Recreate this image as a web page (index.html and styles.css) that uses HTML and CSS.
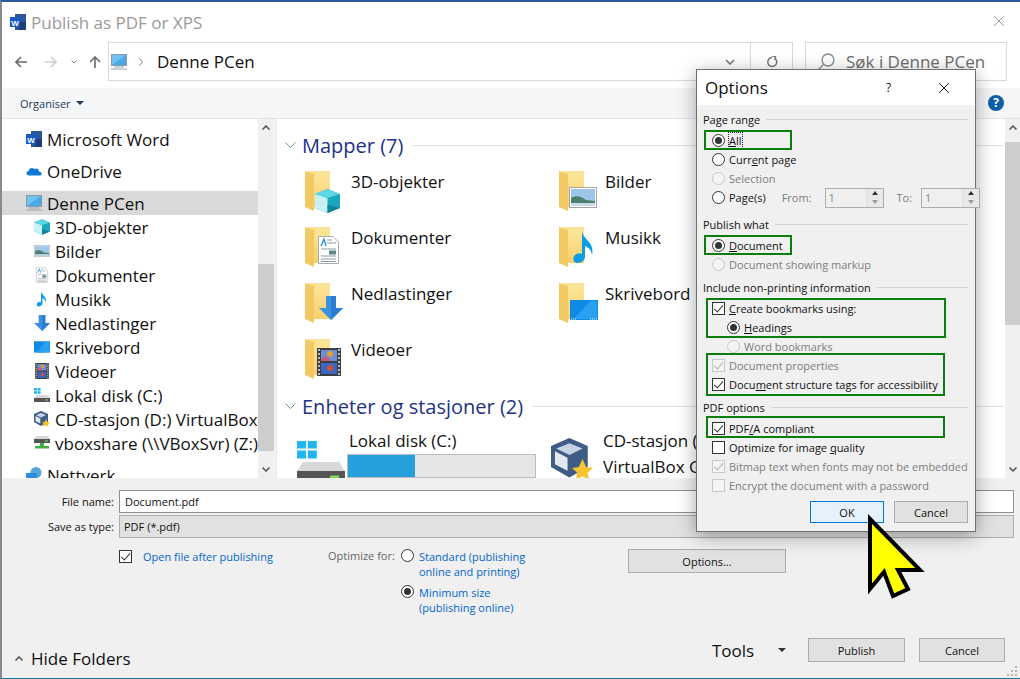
FILE: index.html
```html
<!DOCTYPE html>
<html lang="en">

<head>
    <meta charset="UTF-8">
    <meta name="viewport" content="width=device-width, initial-scale=1.0">
    <title>Publish as PDF or XPS</title>
    <link rel="stylesheet" href="styles.css">
</head>

<body>
    <svg class="sprites" width="0" height="0">
        <defs>
            <linearGradient id="folderFill" x1="0" y1="0" x2="0" y2="1">
                <stop offset="0" stop-color="#fde79c" />
                <stop offset="1" stop-color="#f6d06c" />
            </linearGradient>
            <symbol id="folder" viewBox="0 0 25 40">
                <rect x="5" y="0" width="20" height="36" fill="url(#folderFill)" />
                <path d="M0 0 L9 3 V40 L0 36 Z" fill="#f2c862" />
                <path d="M0 0 L9 3 L25 3 V0 Z" fill="#fbe295" />
            </symbol>
            <symbol id="word" viewBox="0 0 16 16">
                <rect x="5" y="0" width="11" height="16" fill="#2b579a" />
                <rect x="9" y="8" width="7" height="8" fill="#1a3f7a" />
                <rect x="0" y="3" width="10" height="10" fill="#185abd" />
                <text x="5" y="11.5" class="word-letter">W</text>
            </symbol>
            <symbol id="cloud" viewBox="0 0 16 16">
                <path d="M3 12.5 C0 12.5 -0.4 8.6 2.6 8 C3 5.5 6.3 4 8.3 6 C10.5 4.5 13 6 13 8.5 C16.4 8.7 16.4 12.5 13.5 12.5 Z" fill="#0f78d4" />
            </symbol>
            <symbol id="monitor" viewBox="0 0 16 16">
                <rect x="0.5" y="0.5" width="15" height="11" fill="#6fc3f2" stroke="#8a9aa6" />
                <path d="M1 11 L15 1 V11 Z" fill="#4aa9e6" />
                <rect x="3" y="12.5" width="10" height="1" fill="#9aa6b0" />
                <rect x="0" y="14.5" width="16" height="1" fill="#9aa6b0" />
            </symbol>
            <symbol id="cube" viewBox="0 0 25 24">
                <path d="M12.5 0 L25 5 V19 L12.5 24 L0 19 V5 Z" fill="#1ba7bd" />
                <path d="M0 5 L12.5 9 V24 L0 19 Z" fill="#c8f1f4" />
                <path d="M0 5 L12.5 0 L25 5 L12.5 9 Z" fill="#5fd7e2" />
                <path d="M12.5 16 L25 19 L12.5 24 Z" fill="#0e8397" />
            </symbol>
            <symbol id="picture" viewBox="0 0 28 21">
                <rect x="0.5" y="0.5" width="27" height="20" fill="#fff" stroke="#a5a5a5" />
                <rect x="2" y="2" width="24" height="17" fill="#9cc6ea" />
                <path d="M2 11 C7 8 12 9 17 13 L26 14 V19 H2 Z" fill="#4d7f6d" />
                <rect x="2" y="16" width="24" height="3" fill="#c6dced" />
            </symbol>
            <symbol id="doc" viewBox="0 0 21 28">
                <path d="M0.5 0.5 H15 L20.5 6 V27.5 H0.5 Z" fill="#fff" stroke="#a8adb2" />
                <path d="M3 10 L6 3 L8 10" fill="none" stroke="#2a8fe0" stroke-width="1.4" />
                <path d="M9 4 H14 M9 7 H18 M3 13 H18 M3 20 H18 M3 23 H18 M3 25.5 H18" stroke="#8d99a5" />
                <rect x="11" y="14.5" width="7" height="4" fill="#5d8a88" />
            </symbol>
            <symbol id="note" viewBox="0 0 22 33">
                <path d="M9 0 C10 9 22 11 19 24 C18.5 19 15 16 12 15 V26 C12 31 2 35 0.5 29 C-0.5 24 5 21 9 23 Z" fill="#0d9de8" />
            </symbol>
            <symbol id="arrow" viewBox="0 0 24 24">
                <path d="M7 0 H17 V12 H24 L12 24 L0 12 H7 Z" fill="#3d91e0" />
                <path d="M12 0 H17 V12 H24 L12 24 Z" fill="#2b7fd2" />
            </symbol>
            <symbol id="desktop" viewBox="0 0 28 20">
                <rect x="0" y="0" width="28" height="20" fill="#0f8be6" />
                <path d="M4 19 L20 1 H27 V19 Z" fill="#2aa1f0" />
                <path d="M1 19 H6 M20 19 H27" stroke="#fff" stroke-dasharray="1 1" />
            </symbol>
            <symbol id="film" viewBox="0 0 24 28">
                <rect x="0" y="0" width="24" height="28" fill="#3d3d3d" />
                <rect x="4" y="2" width="16" height="11" fill="#6f8ed8" />
                <rect x="4" y="15" width="16" height="11" fill="#3a66c6" />
                <circle cx="13" cy="6" r="3" fill="#e0a02c" />
                <circle cx="13" cy="20" r="3" fill="#d2502c" />
                <path d="M4 11 L9 8 L14 13 H4 Z" fill="#c85a78" />
                <path d="M2 1 V27 M22 1 V27" stroke="#ddd" stroke-width="1.6" stroke-dasharray="2 2" />
            </symbol>
            <symbol id="disk" viewBox="0 0 16 16">
                <path d="M0 1 H3 V3.5 H0 Z M3.6 1 H6.6 V3.5 H3.6 Z M0 4.2 H3 V6.8 H0 Z M3.6 4.2 H6.6 V6.8 H3.6 Z" fill="#1fb6f1" />
                <path d="M2 8 H14 L16 11 H0 Z" fill="#d8d8d8" />
                <rect x="0" y="11" width="16" height="4" fill="#555" />
                <rect x="11" y="12.5" width="3" height="1" fill="#7ed957" />
            </symbol>
            <symbol id="vbox" viewBox="0 0 16 16">
                <path d="M7 0 L14 3 V11 L7 15 L0 11 V3 Z" fill="#3f5c86" />
                <path d="M7 2 L12 4 L7 6.5 L2 4 Z" fill="#c6d3e2" />
                <path d="M1.5 5 L6.3 7.5 V12.5 L1.5 10 Z" fill="#e4e9ef" />
                <path d="M12 8 L13.4 11 L16 11.4 L14 13.2 L14.6 16 L12 14.6 L9.4 16 L10 13.2 L8 11.4 L10.6 11 Z" fill="#f5c430" />
            </symbol>
            <symbol id="share" viewBox="0 0 16 16">
                <path d="M2 1 H14 L16 4 H0 Z" fill="#d8d8d8" />
                <rect x="0" y="4" width="16" height="4" fill="#555" />
                <rect x="11" y="5.5" width="3" height="1" fill="#7ed957" />
                <path d="M6 8 H10 V11 H6 Z M1 11 H15 V13.5 H1 Z" fill="#3fae3f" />
            </symbol>
            <symbol id="network" viewBox="0 0 16 16">
                <circle cx="10" cy="5.5" r="5.5" fill="#57a6dc" />
                <rect x="0" y="6" width="11" height="8" fill="#2f8fdc" />
                <rect x="0" y="14" width="11" height="2" fill="#999" />
            </symbol>
        </defs>
    </svg>

    <div class="window">
        <div class="titlebar">
            <svg class="title-icon"><use href="#word" /></svg>
            <span class="title-text">Publish as PDF or XPS</span>
            <svg class="close-x" viewBox="0 0 12 12"><path d="M1 1 L11 11 M11 1 L1 11" /></svg>
        </div>

        <div class="navbar">
            <div class="nav-buttons">
                <svg class="nav-arrow" viewBox="0 0 12 12"><path d="M12 6 H1 M6 1 L1 6 L6 11" /></svg>
                <svg class="nav-arrow nav-off" viewBox="0 0 12 12"><path d="M0 6 H11 M6 1 L11 6 L6 11" /></svg>
                <svg class="nav-drop" viewBox="0 0 6 4"><path d="M0.5 0.5 L3 3 L5.5 0.5" /></svg>
                <svg class="nav-arrow" viewBox="0 0 12 12"><path d="M6 12 V1 M1 6 L6 1 L11 6" /></svg>
            </div>
            <div class="address">
                <svg class="address-icon"><use href="#monitor" /></svg>
                <svg class="crumb" viewBox="0 0 4 8"><path d="M0.5 0.5 L3.5 4 L0.5 7.5" /></svg>
                <span class="address-text">Denne PCen</span>
                <svg class="address-drop" viewBox="0 0 10 6"><path d="M1 1 L5 5 L9 1" /></svg>
                <div class="refresh">
                    <svg viewBox="0 0 12 12"><path d="M9.6 3 A4.5 4.5 0 1 1 6 1.5" /><path class="refresh-tip" d="M6 0 L9.5 0.5 L9 4" /></svg>
                </div>
            </div>
            <div class="search">
                <svg class="search-icon" viewBox="0 0 18 18"><circle cx="11" cy="7" r="6" /><path d="M6.5 11.5 L1 17" /></svg>
                <span>Søk i Denne PCen</span>
            </div>
        </div>

        <div class="toolbar">
            <span class="organise">Organiser</span>
            <span class="caret"></span>
            <span class="help">?</span>
        </div>

        <div class="browser">
            <div class="tree">
                <div class="tree-row tree-top"><svg class="tree-icon"><use href="#word" /></svg>Microsoft Word</div>
                <div class="tree-row tree-top"><svg class="tree-icon"><use href="#cloud" /></svg>OneDrive</div>
                <div class="tree-row tree-top tree-selected"><svg class="tree-icon"><use href="#monitor" /></svg>Denne PCen</div>
                <div class="tree-row"><svg class="tree-icon"><use href="#cube" /></svg>3D-objekter</div>
                <div class="tree-row"><svg class="tree-icon"><use href="#picture" /></svg>Bilder</div>
                <div class="tree-row"><svg class="tree-icon"><use href="#doc" /></svg>Dokumenter</div>
                <div class="tree-row"><svg class="tree-icon"><use href="#note" /></svg>Musikk</div>
                <div class="tree-row"><svg class="tree-icon"><use href="#arrow" /></svg>Nedlastinger</div>
                <div class="tree-row"><svg class="tree-icon"><use href="#desktop" /></svg>Skrivebord</div>
                <div class="tree-row"><svg class="tree-icon"><use href="#film" /></svg>Videoer</div>
                <div class="tree-row"><svg class="tree-icon"><use href="#disk" /></svg>Lokal disk (C:)</div>
                <div class="tree-row"><svg class="tree-icon"><use href="#vbox" /></svg>CD-stasjon (D:) VirtualBox Guest</div>
                <div class="tree-row"><svg class="tree-icon"><use href="#share" /></svg>vboxshare (\\VBoxSvr) (Z:)</div>
                <div class="tree-row tree-top tree-net"><svg class="tree-icon"><use href="#network" /></svg>Nettverk</div>
            </div>
            <div class="scrollbar tree-scroll">
                <svg class="scroll-arrow" viewBox="0 0 8 5"><path d="M0.5 4.5 L4 1 L7.5 4.5" /></svg>
                <div class="scroll-track"><div class="scroll-thumb"></div></div>
                <svg class="scroll-arrow" viewBox="0 0 8 5"><path d="M0.5 0.5 L4 4 L7.5 0.5" /></svg>
            </div>
            <div class="sash"></div>

            <div class="files">
                <div class="group-head">
                    <svg class="group-chevron" viewBox="0 0 11 6"><path d="M0.5 0.5 L5.5 5.5 L10.5 0.5" /></svg>
                    <span>Mapper (7)</span>
                    <div class="group-line"></div>
                </div>
                <div class="file-grid">
                    <div class="file-item">
                        <svg class="file-icon"><use href="#folder" x="4" y="2" width="25" height="40" /><use href="#cube" x="14" y="20" width="25" height="24" /></svg>
                        <span>3D-objekter</span>
                    </div>
                    <div class="file-item">
                        <svg class="file-icon"><use href="#folder" x="4" y="2" width="25" height="40" /><use href="#picture" x="14" y="18" width="28" height="21" /></svg>
                        <span>Bilder</span>
                    </div>
                    <div class="file-item">
                        <svg class="file-icon"><use href="#folder" x="4" y="2" width="25" height="40" /><use href="#doc" x="17" y="11" width="21" height="28" /></svg>
                        <span>Dokumenter</span>
                    </div>
                    <div class="file-item">
                        <svg class="file-icon"><use href="#folder" x="4" y="2" width="25" height="40" /><use href="#note" x="18" y="6" width="22" height="33" /></svg>
                        <span>Musikk</span>
                    </div>
                    <div class="file-item">
                        <svg class="file-icon"><use href="#folder" x="4" y="2" width="25" height="40" /><use href="#arrow" x="18" y="15" width="24" height="24" /></svg>
                        <span>Nedlastinger</span>
                    </div>
                    <div class="file-item">
                        <svg class="file-icon"><use href="#folder" x="4" y="2" width="25" height="40" /><use href="#desktop" x="15" y="19" width="28" height="20" /></svg>
                        <span>Skrivebord</span>
                    </div>
                    <div class="file-item">
                        <svg class="file-icon"><use href="#folder" x="4" y="2" width="25" height="40" /><use href="#film" x="16" y="11" width="24" height="28" /></svg>
                        <span>Videoer</span>
                    </div>
                </div>
                <div class="group-head">
                    <svg class="group-chevron" viewBox="0 0 11 6"><path d="M0.5 0.5 L5.5 5.5 L10.5 0.5" /></svg>
                    <span>Enheter og stasjoner (2)</span>
                    <div class="group-line"></div>
                </div>
                <div class="file-grid drive-grid">
                    <div class="drive-item">
                        <svg class="drive-icon"><use href="#disk" width="48" height="48" /></svg>
                        <div class="drive-info">
                            <span>Lokal disk (C:)</span>
                            <div class="drive-bar"><div class="drive-used"></div></div>
                        </div>
                    </div>
                    <div class="drive-item">
                        <svg class="drive-icon"><use href="#vbox" width="42" height="42" /></svg>
                        <div class="drive-info">
                            <span>CD-stasjon (D:)</span>
                            <span>VirtualBox Guest</span>
                        </div>
                    </div>
                </div>
            </div>

            <div class="scrollbar files-scroll">
                <svg class="scroll-arrow" viewBox="0 0 8 5"><path d="M0.5 4.5 L4 1 L7.5 4.5" /></svg>
                <div class="scroll-track"><div class="scroll-thumb"></div></div>
                <svg class="scroll-arrow" viewBox="0 0 8 5"><path d="M0.5 0.5 L4 4 L7.5 0.5" /></svg>
            </div>
        </div>

        <div class="form">
            <div class="field">
                <label>File name:</label>
                <div class="field-box field-input">Document.pdf</div>
            </div>
            <div class="field">
                <label>Save as type:</label>
                <div class="field-box field-select">PDF (*.pdf)</div>
            </div>
            <div class="publish-options">
                <div class="open-after">
                    <span class="check on"></span>
                    <span class="link-text">Open file after publishing</span>
                </div>
                <span class="optimize-label">Optimize for:</span>
                <div class="optimize-choices">
                    <div class="optimize-choice">
                        <span class="radio"></span>
                        <span class="link-text">Standard (publishing<br>online and printing)</span>
                    </div>
                    <div class="optimize-choice">
                        <span class="radio on"></span>
                        <span class="link-text">Minimum size<br>(publishing online)</span>
                    </div>
                </div>
                <button class="btn btn-options">Options...</button>
            </div>
            <div class="form-footer">
                <div class="hide-folders">
                    <svg viewBox="0 0 8 5"><path d="M0.5 4.5 L4 1 L7.5 4.5" /></svg>
                    <span>Hide Folders</span>
                </div>
                <span class="tools">Tools</span>
                <span class="caret tools-caret"></span>
                <button class="btn btn-publish">Publish</button>
                <button class="btn btn-cancel">Cancel</button>
            </div>
            <svg class="grip" viewBox="0 0 12 12"><path d="M9 1 h2 v2 h-2 Z M5 5 h2 v2 h-2 Z M9 5 h2 v2 h-2 Z M1 9 h2 v2 h-2 Z M5 9 h2 v2 h-2 Z M9 9 h2 v2 h-2 Z" /></svg>
        </div>
    </div>

    <!-- options dialog on top of the file browser -->
    <div class="dialog">
        <div class="dialog-title">
            <span class="dialog-name">Options</span>
            <span class="dialog-q">?</span>
            <svg class="dialog-x" viewBox="0 0 12 12"><path d="M1 1 L11 11 M11 1 L1 11" /></svg>
        </div>
        <div class="dialog-body">
            <div class="legend legend-first"><span>Page range</span><div class="legend-line"></div></div>
            <div class="opt"><span class="radio on"></span><span class="focus-label"><u>A</u>ll</span></div>
            <div class="opt"><span class="radio"></span><span>Curr<u>e</u>nt page</span></div>
            <div class="opt opt-off"><span class="radio"></span><span>Selection</span></div>
            <div class="opt">
                <span class="radio"></span><span>Pa<u>g</u>e(s)</span>
                <span class="spin-label spin-from">From:</span>
                <div class="spin"><span>1</span><div class="spin-btns"><i class="up"></i><i class="down"></i></div></div>
                <span class="spin-label spin-to">To:</span>
                <div class="spin"><span>1</span><div class="spin-btns"><i class="up"></i><i class="down"></i></div></div>
            </div>

            <div class="legend legend-what"><span>Publish what</span><div class="legend-line"></div></div>
            <div class="opt"><span class="radio on"></span><span><u>D</u>ocument</span></div>
            <div class="opt opt-off"><span class="radio"></span><span>Document showing markup</span></div>

            <div class="legend"><span>Include non-printing information</span><div class="legend-line"></div></div>
            <div class="opt"><span class="check on"></span><span><u>C</u>reate bookmarks using:</span></div>
            <div class="opt opt-sub"><span class="radio on"></span><span><u>H</u>eadings</span></div>
            <div class="opt opt-sub opt-off"><span class="radio"></span><span>Word bookmarks</span></div>
            <div class="opt opt-off"><span class="check on"></span><span>Document properties</span></div>
            <div class="opt"><span class="check on"></span><span>Docu<u>m</u>ent structure tags for accessibility</span></div>

            <div class="legend"><span>PDF options</span><div class="legend-line"></div></div>
            <div class="opt"><span class="check on"></span><span>PDF<u>/</u>A compliant</span></div>
            <div class="opt"><span class="check"></span><span>Optimize for image <u>q</u>uality</span></div>
            <div class="opt opt-off"><span class="check on"></span><span>Bitmap text when fonts may not be embedded</span></div>
            <div class="opt opt-off"><span class="check"></span><span>Encrypt the document with a password</span></div>

            <div class="dialog-buttons">
                <button class="btn btn-ok">OK</button>
                <button class="btn btn-dialog-cancel">Cancel</button>
            </div>
        </div>

        <div class="mark mark-all"></div>
        <div class="mark mark-document"></div>
        <div class="mark mark-bookmarks"></div>
        <div class="mark mark-tags"></div>
        <div class="mark mark-pdfa"></div>
    </div>

    <svg class="pointer" viewBox="0 0 70 95">
        <path d="M10 14 L60 65 L38 65 L48 84 L33 91 L24 67 L10 84 Z" />
    </svg>
</body>

</html>
```

FILE: styles.css
```css
* {
    box-sizing: border-box;
}

html,
body {
    margin: 0;
    width: 1020px;
    height: 679px;
    overflow: hidden;
}

body {
    font-family: "Open Sans", "Noto Sans", sans-serif;
    color: #111;
    background: #fff;
    position: relative;
}

.sprites {
    position: absolute;
}

.word-letter {
    font-family: "Liberation Sans", sans-serif;
    font-size: 8px;
    font-weight: 700;
    fill: #fff;
    text-anchor: middle;
}

svg path {
    fill-rule: nonzero;
}

.window {
    width: 1020px;
    height: 679px;
    display: flex;
    flex-direction: column;
    border-top: 2px solid #2b579a;
    border-left: 2px solid #8a8a8a;
    border-bottom: 1px solid #0a7ab0;
    background: #fff;
}

/* title bar */
.titlebar {
    height: 40px;
    flex-shrink: 0;
    display: flex;
    align-items: center;
    padding-left: 8px;
    padding-right: 15px;
}

.title-icon {
    width: 16px;
    height: 16px;
    margin-right: 5px;
}

.title-text {
    font-size: 17px;
    color: #9a9a9a;
}

.close-x {
    width: 12px;
    height: 12px;
    margin-left: auto;
    margin-top: -3px;
    fill: none;
    stroke: #a0a0a0;
}

/* address row */
.navbar {
    height: 39px;
    flex-shrink: 0;
    display: flex;
}

.nav-buttons {
    width: 106px;
    flex-shrink: 0;
    display: flex;
    align-items: center;
    padding-left: 13px;
}

.nav-buttons svg {
    fill: none;
    stroke: #6a6a6a;
    stroke-width: 1.6;
}

.nav-arrow {
    width: 12px;
    height: 12px;
}

.nav-arrow.nav-off {
    margin-left: 18px;
    stroke: #cfcfcf;
}

.nav-buttons .nav-drop {
    width: 6px;
    height: 4px;
    margin: 0 12px 0 14px;
    stroke: #888;
    stroke-width: 1;
}

.address {
    width: 685px;
    flex-shrink: 0;
    border: 1px solid #d9d9d9;
    display: flex;
    align-items: center;
    padding-left: 2px;
}

.address-icon {
    width: 16px;
    height: 16px;
}

.crumb {
    width: 4px;
    height: 8px;
    margin-left: 12px;
    fill: none;
    stroke: #777;
}

.address-text {
    font-size: 17px;
    margin-left: 14px;
}

.address-drop {
    width: 10px;
    height: 6px;
    margin-left: auto;
    margin-right: 15px;
    fill: none;
    stroke: #777;
    stroke-width: 1.6;
}

.refresh {
    width: 42px;
    height: 100%;
    border-left: 1px solid #d9d9d9;
    display: flex;
    align-items: center;
    justify-content: center;
}

.refresh svg {
    width: 12px;
    height: 12px;
    fill: none;
    stroke: #777;
    stroke-width: 1.5;
}

.search {
    width: 202px;
    margin-left: 12px;
    border: 1px solid #d9d9d9;
    display: flex;
    align-items: center;
    padding-left: 11px;
    font-size: 17px;
    color: #6d6d6d;
}

.search-icon {
    width: 18px;
    height: 18px;
    margin-right: 11px;
    fill: none;
    stroke: #8a8a8a;
    stroke-width: 1.3;
}

/* organise row */
.toolbar {
    height: 31px;
    margin-top: 7px;
    flex-shrink: 0;
    background: #f5f6f7;
    border-bottom: 1px solid #e2e2e2;
    display: flex;
    align-items: center;
    padding-left: 18px;
    padding-right: 16px;
}

.organise {
    font-size: 11px;
    color: #1e395b;
}

.caret {
    width: 0;
    height: 0;
    margin-left: 5px;
    border-left: 4px solid transparent;
    border-right: 4px solid transparent;
    border-top: 4px solid #1e395b;
}

.help {
    width: 16px;
    height: 16px;
    margin-left: auto;
    border-radius: 50%;
    background: #0f5fa8;
    color: #fff;
    font-size: 12px;
    font-weight: 700;
    line-height: 16px;
    text-align: center;
}

/* navigation tree and file list */
.browser {
    height: 359px;
    flex-shrink: 0;
    display: flex;
    overflow: hidden;
}

.tree {
    width: 256px;
    flex-shrink: 0;
    padding-top: 8px;
    overflow: hidden;
}

.tree-row {
    height: 24px;
    display: flex;
    align-items: center;
    padding-left: 32px;
    font-size: 17px;
    white-space: nowrap;
    overflow: hidden;
}

.tree-top {
    padding-left: 24px;
    margin-bottom: 8px;
}

.tree-selected {
    background: #d9d9d9;
    margin-bottom: 0;
}

.tree-net {
    margin-top: 8px;
}

.tree-icon {
    width: 16px;
    height: 16px;
    margin-right: 5px;
    flex-shrink: 0;
}

.scrollbar {
    width: 16px;
    flex-shrink: 0;
    background: #f0f0f0;
    display: flex;
    flex-direction: column;
    align-items: center;
    padding: 6px 0;
}

.scroll-arrow {
    width: 8px;
    height: 5px;
    flex-shrink: 0;
    fill: none;
    stroke: #505050;
    stroke-width: 1.5;
}

.scroll-track {
    flex: 1;
    width: 100%;
    margin: 3px 0;
}

.scroll-thumb {
    width: 100%;
    background: #cdcdcd;
}

.tree-scroll .scroll-thumb {
    height: 187px;
    margin-top: 131px;
}

.files-scroll {
    margin-left: 1px;
}

.files-scroll .scroll-thumb {
    height: 183px;
    margin-top: 9px;
}

.sash {
    width: 3px;
    flex-shrink: 0;
    background: #f4f4f4;
    border-right: 1px solid #e8e8e8;
}

.files {
    width: 727px;
    flex-shrink: 0;
    padding-top: 13px;
    padding-left: 8px;
}

.group-head {
    height: 26px;
    display: flex;
    align-items: center;
    font-size: 20px;
    color: #1e3287;
}

.group-chevron {
    width: 11px;
    height: 6px;
    margin-right: 6px;
    fill: none;
    stroke: #8a8a8a;
}

.group-line {
    flex: 1;
    height: 1px;
    margin-left: 9px;
    background: #e2e2e2;
}

.file-grid {
    display: grid;
    grid-template-columns: 254px 254px;
    grid-auto-rows: 56px;
    margin-top: 11px;
    padding-left: 16px;
}

.file-item {
    display: flex;
    gap: 2px;
    font-size: 17px;
    line-height: 26px;
}

.file-icon {
    width: 48px;
    height: 48px;
    flex-shrink: 0;
}

.drive-grid {
    margin-top: 9px;
    margin-left: -4px;
}

.drive-item {
    display: flex;
    font-size: 17px;
    line-height: 26px;
}

.drive-icon {
    width: 48px;
    height: 48px;
    flex-shrink: 0;
    margin-top: 10px;
}

.drive-info {
    display: flex;
    flex-direction: column;
    white-space: nowrap;
    margin-left: 4px;
}

.drive-bar {
    width: 189px;
    height: 24px;
    margin-left: -2px;
    background: #e6e6e6;
    border: 1px solid #bcbcbc;
}

.drive-used {
    width: 36%;
    height: 100%;
    background: #26a0da;
}

/* bottom form */
.form {
    flex: 1;
    background: #f0f0f0;
    display: flex;
    flex-direction: column;
    padding-top: 12px;
    position: relative;
    font-size: 11px;
}

.field {
    display: flex;
    align-items: center;
    margin-bottom: 2px;
}

.field label {
    width: 112px;
    text-align: right;
    margin-right: 5px;
}

.field-box {
    width: 895px;
    height: 23px;
    display: flex;
    align-items: center;
    padding-left: 5px;
}

.field-input {
    background: #fff;
    border: 1px solid #8f8f8f;
}

.field-select {
    background: #e1e1e1;
    border: 1px solid #adadad;
    padding-left: 4px;
}

.publish-options {
    display: flex;
    align-items: flex-start;
    margin-top: 9px;
    padding-left: 117px;
}

.open-after {
    width: 209px;
    display: flex;
    align-items: center;
    gap: 11px;
    height: 14px;
}

.link-text {
    color: #0066cc;
    line-height: 15px;
}

.optimize-label {
    width: 73px;
    color: #666;
    line-height: 14px;
}

.optimize-choices {
    width: 227px;
    display: flex;
    flex-direction: column;
    gap: 6px;
}

.optimize-choice {
    display: flex;
    align-items: flex-start;
    gap: 5px;
}

.form-footer {
    margin-top: auto;
    margin-bottom: 16px;
    display: flex;
    align-items: center;
    padding-left: 13px;
}

.hide-folders {
    width: 697px;
    display: flex;
    align-items: center;
    gap: 8px;
    font-size: 17px;
    position: relative;
    top: 8px;
}

.hide-folders svg {
    width: 8px;
    height: 5px;
    fill: none;
    stroke: #444;
    stroke-width: 1.4;
}

.tools {
    font-size: 17px;
    width: 66px;
}

.tools-caret {
    margin-left: 0;
    border-top-color: #333;
}

.grip {
    position: absolute;
    right: 2px;
    bottom: 1px;
    width: 12px;
    height: 12px;
    fill: #b5b5b5;
}

.btn {
    font-family: inherit;
    font-size: 11px;
    color: #111;
    height: 24px;
    padding: 0;
    background: #e1e1e1;
    border: 1px solid #adadad;
}

.btn-options {
    width: 158px;
    margin-left: 0;
}

.btn-publish {
    width: 97px;
    margin-left: 22px;
}

.btn-cancel {
    width: 86px;
    margin-left: 14px;
}

/* form controls shared by dialog and form */
.radio,
.check {
    width: 13px;
    height: 13px;
    flex-shrink: 0;
    display: inline-block;
    position: relative;
    border: 1px solid #333;
    background: #fff;
}

.radio {
    border-radius: 50%;
}

.radio.on::after {
    content: "";
    position: absolute;
    left: 2px;
    top: 2px;
    width: 7px;
    height: 7px;
    border-radius: 50%;
    background: #333;
}

.check.on::after {
    content: "";
    position: absolute;
    left: 3px;
    top: 0px;
    width: 4px;
    height: 8px;
    border-right: 1.5px solid #333;
    border-bottom: 1.5px solid #333;
    transform: rotate(40deg);
}

/* options dialog */
.dialog {
    position: absolute;
    left: 696px;
    top: 69px;
    width: 280px;
    height: 463px;
    background: #f0f0f0;
    border: 1px solid #707070;
    box-shadow: 0 4px 18px rgba(0, 0, 0, 0.35);
    font-size: 11px;
}

.dialog-title {
    height: 35px;
    background: #fff;
    display: flex;
    align-items: center;
    padding-left: 8px;
}

.dialog-name {
    font-size: 17px;
    width: 181px;
}

.dialog-q {
    font-size: 12px;
    width: 52px;
}

.dialog-x {
    width: 12px;
    height: 12px;
    fill: none;
    stroke: #222;
}

.dialog-body {
    padding: 0 7px 0 6px;
}

.legend {
    height: 16px;
    margin-top: 5px;
    margin-bottom: 4px;
    display: flex;
    align-items: center;
}

.legend-first {
    margin-top: 6px;
}

.legend-what {
    margin-top: 9px;
}

.legend-line {
    flex: 1;
    height: 1px;
    margin-left: 6px;
    background: #d5d5d5;
}

.opt {
    height: 19px;
    display: flex;
    align-items: center;
    gap: 4px;
    padding-left: 9px;
    white-space: nowrap;
}

.opt-sub {
    padding-left: 24px;
}

.opt-off {
    color: #7d7d7d;
}

.opt-off .radio,
.opt-off .check {
    border-color: #c8c8c8;
    background: #f4f4f4;
}

.opt-off .check.on::after {
    border-color: #b0b0b0;
}

.focus-label {
    outline: 1px dotted #222;
}

.spin-label {
    color: #7d7d7d;
}

.spin-from {
    margin-left: 12px;
}

.spin-to {
    margin-left: 9px;
}

.spin {
    width: 59px;
    height: 20px;
    flex-shrink: 0;
    margin-left: 5px;
    background: #efefef;
    border: 1px solid #adadad;
    color: #8a8a8a;
    display: flex;
    align-items: center;
    justify-content: space-between;
    padding-left: 3px;
}

.spin-from + .spin {
    margin-left: 9px;
}

.spin-btns {
    width: 17px;
    height: 100%;
    display: flex;
    flex-direction: column;
    background: #e8e8e8;
    border-left: 1px solid #e0e0e0;
}

.spin-btns i {
    flex: 1;
    display: flex;
    align-items: center;
    justify-content: center;
}

.spin-btns i::after {
    content: "";
    border-left: 3.5px solid transparent;
    border-right: 3.5px solid transparent;
}

.spin-btns .up::after {
    border-bottom: 4px solid #333;
}

.spin-btns .down::after {
    border-top: 4px solid #999;
}

.dialog-buttons {
    margin-top: 6px;
    display: flex;
    justify-content: flex-end;
    gap: 10px;
}

.dialog-buttons .btn {
    width: 74px;
    height: 22px;
}

.btn-ok {
    background: #e5f1fb;
    border-color: #0078d7;
}

/* green highlight boxes */
.mark {
    position: absolute;
    border: 2px solid #0a7d0a;
}

.mark-all {
    left: 7px;
    top: 60px;
    width: 88px;
    height: 20px;
}

.mark-document {
    left: 7px;
    top: 165px;
    width: 88px;
    height: 20px;
}

.mark-bookmarks {
    left: 9px;
    top: 228px;
    width: 240px;
    height: 40px;
}

.mark-tags {
    left: 9px;
    top: 283px;
    width: 239px;
    height: 43px;
}

.mark-pdfa {
    left: 9px;
    top: 346px;
    width: 239px;
    height: 22px;
}

.pointer {
    position: absolute;
    left: 860px;
    top: 505px;
    width: 70px;
    height: 95px;
    fill: #ffff00;
    stroke: #000;
    stroke-width: 4;
}
```
